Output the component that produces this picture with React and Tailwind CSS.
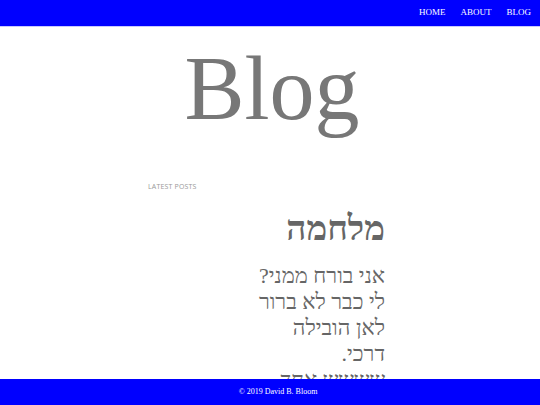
export default function App() {
  const nav = ["HOME", "ABOUT", "BLOG"];
  const lines = ["אני בורח ממני?", "לי כבר לא ברור", "לאן הובילה", "דרכי.", "שששש אחד"];
  return (
    <div className="relative h-[405px] w-[540px] overflow-hidden bg-white">
      <header className="absolute left-0 right-0 top-0 z-10 flex h-[26px] items-center justify-end gap-[15px] bg-[#0000ff] pr-[9px] shadow-[0_1px_0_#c8c8ff]">
        {nav.map((item) => (
          <a key={item} className="text-[9px] text-white" style={{ fontFamily: '"Liberation Serif", serif' }}>
            {item}
          </a>
        ))}
      </header>

      <main className="pt-[26px]">
        <h1 className="mt-[8px] pl-[4px] text-center text-[90px] leading-[110px] text-[#777]" style={{ fontFamily: '"Liberation Serif", serif' }}>
          Blog
        </h1>
        <section className="mx-auto mt-[38px] w-[244px]">
          <p className="text-[7px] tracking-wide text-[#999]" style={{ fontFamily: '"Open Sans", sans-serif' }}>
            LATEST POSTS
          </p>
          <article dir="rtl" className="pr-[7px]">
            <h2 className="mt-[14px] text-[35px] font-bold leading-[44px] text-[#666]" style={{ fontFamily: '"Liberation Serif", serif' }}>
              מלחמה
            </h2>
            <div className="mt-[12px] text-[22px] leading-[26px] text-[#666]" style={{ fontFamily: '"Liberation Serif", serif' }}>
              {lines.map((line) => (
                <p key={line} className="whitespace-nowrap">{line}</p>
              ))}
            </div>
          </article>
        </section>
      </main>

      <footer className="absolute bottom-0 left-0 right-0 z-10 flex h-[26px] items-center justify-center bg-[#0000ff] pl-[16px]">
        <p className="text-[8px] text-white" style={{ fontFamily: '"Liberation Serif", serif' }}>
          © 2019 David B. Bloom
        </p>
      </footer>
    </div>
  );
}
